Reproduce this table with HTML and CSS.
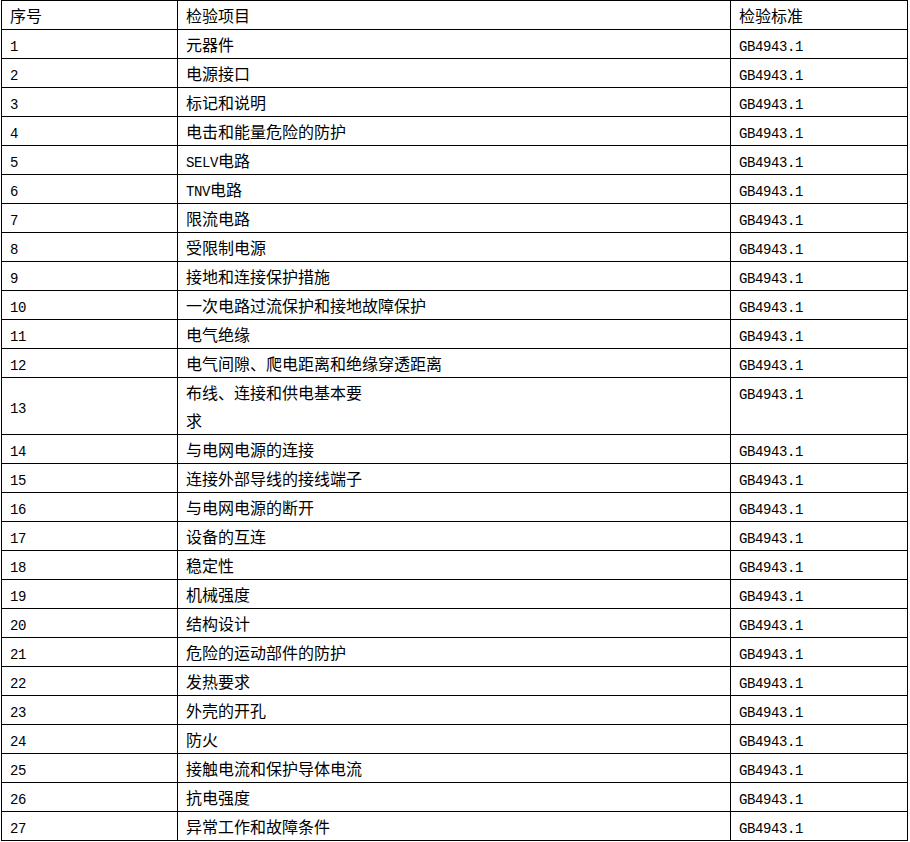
FILE: index.html
```html
<!DOCTYPE html>
<html lang="zh-CN">
<head>
<meta charset="utf-8">
<title>检验项目</title>
<link rel="stylesheet" href="styles.css">
</head>
<body>
<table class="spec">
<colgroup><col class="c1"><col class="c2"><col class="c3"></colgroup>
<thead>
<tr><th>序号</th><th>检验项目</th><th>检验标准</th></tr>
</thead>
<tbody>
<tr><td class="num"><span class="lat">1</span></td><td>元器件</td><td><span class="lat">GB4943.1</span></td></tr>
<tr><td class="num"><span class="lat">2</span></td><td>电源接口</td><td><span class="lat">GB4943.1</span></td></tr>
<tr><td class="num"><span class="lat">3</span></td><td>标记和说明</td><td><span class="lat">GB4943.1</span></td></tr>
<tr><td class="num"><span class="lat">4</span></td><td>电击和能量危险的防护</td><td><span class="lat">GB4943.1</span></td></tr>
<tr><td class="num"><span class="lat">5</span></td><td><span class="lat">SELV</span>电路</td><td><span class="lat">GB4943.1</span></td></tr>
<tr><td class="num"><span class="lat">6</span></td><td><span class="lat">TNV</span>电路</td><td><span class="lat">GB4943.1</span></td></tr>
<tr><td class="num"><span class="lat">7</span></td><td>限流电路</td><td><span class="lat">GB4943.1</span></td></tr>
<tr><td class="num"><span class="lat">8</span></td><td>受限制电源</td><td><span class="lat">GB4943.1</span></td></tr>
<tr><td class="num"><span class="lat">9</span></td><td>接地和连接保护措施</td><td><span class="lat">GB4943.1</span></td></tr>
<tr><td class="num"><span class="lat">10</span></td><td>一次电路过流保护和接地故障保护</td><td><span class="lat">GB4943.1</span></td></tr>
<tr><td class="num"><span class="lat">11</span></td><td>电气绝缘</td><td><span class="lat">GB4943.1</span></td></tr>
<tr><td class="num"><span class="lat">12</span></td><td>电气间隙、爬电距离和绝缘穿透距离</td><td><span class="lat">GB4943.1</span></td></tr>
<tr><td class="num"><span class="lat">13</span></td><td>布线、连接和供电基本要<br>求</td><td><span class="lat">GB4943.1</span></td></tr>
<tr><td class="num"><span class="lat">14</span></td><td>与电网电源的连接</td><td><span class="lat">GB4943.1</span></td></tr>
<tr><td class="num"><span class="lat">15</span></td><td>连接外部导线的接线端子</td><td><span class="lat">GB4943.1</span></td></tr>
<tr><td class="num"><span class="lat">16</span></td><td>与电网电源的断开</td><td><span class="lat">GB4943.1</span></td></tr>
<tr><td class="num"><span class="lat">17</span></td><td>设备的互连</td><td><span class="lat">GB4943.1</span></td></tr>
<tr><td class="num"><span class="lat">18</span></td><td>稳定性</td><td><span class="lat">GB4943.1</span></td></tr>
<tr><td class="num"><span class="lat">19</span></td><td>机械强度</td><td><span class="lat">GB4943.1</span></td></tr>
<tr><td class="num"><span class="lat">20</span></td><td>结构设计</td><td><span class="lat">GB4943.1</span></td></tr>
<tr><td class="num"><span class="lat">21</span></td><td>危险的运动部件的防护</td><td><span class="lat">GB4943.1</span></td></tr>
<tr><td class="num"><span class="lat">22</span></td><td>发热要求</td><td><span class="lat">GB4943.1</span></td></tr>
<tr><td class="num"><span class="lat">23</span></td><td>外壳的开孔</td><td><span class="lat">GB4943.1</span></td></tr>
<tr><td class="num"><span class="lat">24</span></td><td>防火</td><td><span class="lat">GB4943.1</span></td></tr>
<tr><td class="num"><span class="lat">25</span></td><td>接触电流和保护导体电流</td><td><span class="lat">GB4943.1</span></td></tr>
<tr><td class="num"><span class="lat">26</span></td><td>抗电强度</td><td><span class="lat">GB4943.1</span></td></tr>
<tr><td class="num"><span class="lat">27</span></td><td>异常工作和故障条件</td><td><span class="lat">GB4943.1</span></td></tr>
</tbody>
</table>
</body>
</html>
```
FILE: styles.css
```css
html, body {
  margin: 0;
  padding: 0;
  background: #fff;
}
body {
  font-family: "Noto Sans CJK SC", "Noto Sans", sans-serif;
  font-size: 16px;
  color: #000;
}
.spec {
  border-collapse: collapse;
  table-layout: fixed;
  width: 907px;
  margin-left: 1px;
}
.c1 { width: 176px; }
.c2 { width: 553px; }
.c3 { width: 177px; }
.spec th,
.spec td {
  border: 1px solid #000;
  padding: 0 0 0 8px;
  line-height: 28px;
  height: 28px;
  text-align: left;
  font-weight: normal;
  vertical-align: top;
  white-space: nowrap;
  overflow: hidden;
}
.spec td.num {
  vertical-align: middle;
}
.lat {
  font-family: "Liberation Mono", "DejaVu Sans Mono", monospace;
  font-size: 14px;
  letter-spacing: -0.4px;
  line-height: 0;
}
```
